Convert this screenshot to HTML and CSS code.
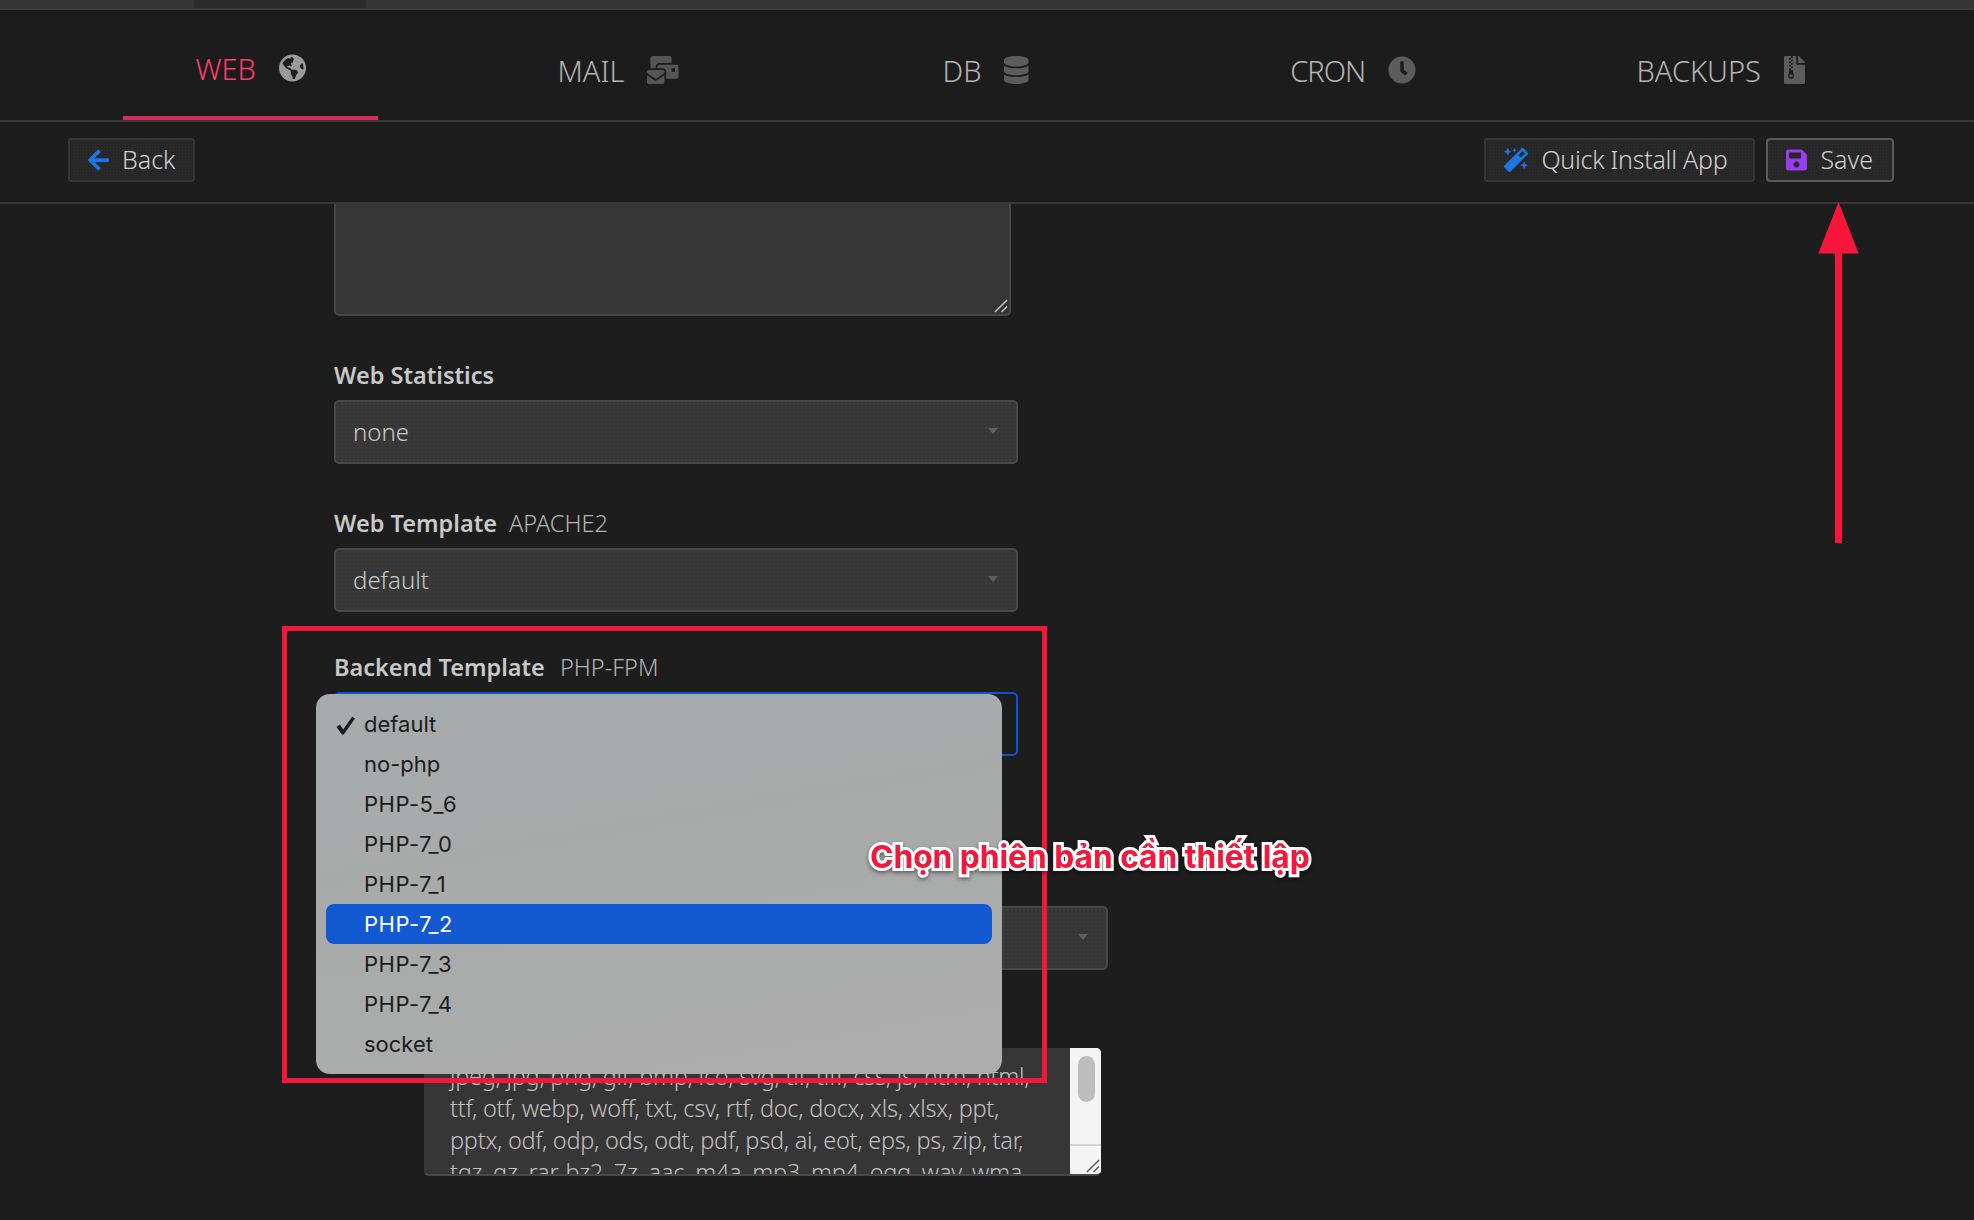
FILE: index.html
```html
<!DOCTYPE html>
<html lang="en">
<head>
  <meta charset="UTF-8" />
  <title>Edit Web Domain</title>
  <link rel="stylesheet" href="styles.css">
</head>
<body>

  <!-- Top strip -->
  <div class="top-strip">
    <div class="top-tab"></div>
  </div>

  <!-- Stat tabs -->
  <nav class="tabs">
    <div class="tab-cell">
      <a class="tab active">WEB
        <svg class="tab-icon globe" viewBox="0 0 496 512"><circle cx="248" cy="256" r="248" fill="#1d1d1d"/><path d="M248 8C111.03 8 0 119.03 0 256s111.03 248 248 248 248-111.03 248-248S384.97 8 248 8zm82.29 357.6c-3.9 3.88-7.99 7.95-11.31 11.28-2.99 3-5.1 6.7-6.17 10.71-1.51 5.66-2.73 11.38-4.77 16.87l-17.39 46.85c-13.76 3-28 4.69-42.65 4.69v-27.38c1.69-12.62-7.64-36.26-22.63-51.25-6-6-9.37-14.14-9.37-22.63v-32.01c0-11.64-6.27-22.34-16.46-27.97-14.37-7.95-34.81-19.06-48.81-26.11-11.48-5.78-22.1-13.14-31.65-21.75l-.8-.72a114.792 114.792 0 0 1-18.06-20.74c-9.38-13.77-24.66-36.42-34.59-51.14 20.47-45.5 57.36-82.04 103.2-101.89l24.01 12.01C203.48 89.74 216 82.01 216 70.11v-11.3c7.99-1.29 16.12-2.11 24.39-2.42l28.3 28.3c6.25 6.25 6.25 16.38 0 22.63L264 112l-10.34 10.34c-3.12 3.12-3.12 8.19 0 11.31l4.69 4.69c3.12 3.12 3.12 8.19 0 11.31l-8 8a8.008 8.008 0 0 1-5.66 2.34h-8.99c-2.08 0-4.08.81-5.58 2.27l-9.92 9.65a8.008 8.008 0 0 0-1.58 9.31l15.59 31.19c2.66 5.32-1.21 11.58-7.15 11.58h-5.64c-1.93 0-3.79-.7-5.24-1.96l-9.28-8.06a16.017 16.017 0 0 0-15.55-3.1l-31.17 10.39a11.95 11.95 0 0 0-8.17 11.34c0 4.53 2.56 8.66 6.61 10.69l11.08 5.54c9.41 4.71 19.79 7.16 30.31 7.16s22.59 27.29 32 32h66.75c8.49 0 16.62 3.37 22.63 9.37l13.69 13.69a30.503 30.503 0 0 1 8.93 21.57 46.536 46.536 0 0 1-13.72 32.98zM417 274.25c-5.79-1.45-10.84-5-14.15-9.97l-17.98-26.97a23.97 23.97 0 0 1 0-26.62l19.59-29.38c2.32-3.47 5.5-6.29 9.24-8.15l12.98-6.49C440.2 193.59 448 223.87 448 256c0 8.67-.74 17.16-1.82 25.54L417 274.25z"/></svg>
      </a>
    </div>
    <div class="tab-cell">
      <a class="tab">MAIL
        <svg class="tab-icon mail" viewBox="0 0 576 512"><path d="M160 448c-25.6 0-51.2-22.4-64-32-64-44.8-83.2-60.8-96-70.4V480c0 17.67 14.33 32 32 32h256c17.67 0 32-14.33 32-32V345.6c-12.8 9.6-32 25.6-96 70.4-12.8 9.6-38.4 32-64 32zm128-192H32c-17.67 0-32 14.33-32 32v16c25.6 19.2 22.4 19.2 115.2 86.4 9.6 6.4 28.8 25.6 44.8 25.6s35.2-19.2 44.8-22.4c92.8-67.2 89.6-67.2 115.2-86.4V288c0-17.67-14.33-32-32-32zm256-96H224c-17.67 0-32 14.33-32 32v32h96c33.21 0 60.59 25.42 63.71 57.82l.29-.22V416h192c17.67 0 32-14.33 32-32V192c0-17.67-14.33-32-32-32zm-32 128h-64v-64h64v64zm-352-96c0-35.29 28.71-64 64-64h224V32c0-17.67-14.33-32-32-32H96C78.33 0 64 14.33 64 32v192h96v-32z"/></svg>
      </a>
    </div>
    <div class="tab-cell">
      <a class="tab">DB
        <svg class="tab-icon db" viewBox="0 0 448 512"><path d="M448 73.143v45.714C448 159.143 347.667 192 224 192S0 159.143 0 118.857V73.143C0 32.857 100.333 0 224 0s224 32.857 224 73.143zM448 176v102.857C448 319.143 347.667 352 224 352S0 319.143 0 278.857V176c48.125 33.143 136.208 48.572 224 48.572S399.874 209.143 448 176zm0 160v102.857C448 479.143 347.667 512 224 512S0 479.143 0 438.857V336c48.125 33.143 136.208 48.572 224 48.572S399.874 369.143 448 336z"/></svg>
      </a>
    </div>
    <div class="tab-cell">
      <a class="tab tab-tight">CRON
        <svg class="tab-icon clock" viewBox="0 0 512 512"><path d="M256,8C119,8,8,119,8,256S119,504,256,504,504,393,504,256,393,8,256,8Zm92.49,313h0l-20,25a16,16,0,0,1-22.49,2.5h0l-67-49.72a40,40,0,0,1-15-31.23V112a16,16,0,0,1,16-16h32a16,16,0,0,1,16,16V256l58,42.5A16,16,0,0,1,348.49,321Z"/></svg>
      </a>
    </div>
    <div class="tab-cell">
      <a class="tab">BACKUPS
        <svg class="tab-icon zip" viewBox="0 0 384 512"><path d="M377 105L279.1 7c-4.5-4.5-10.6-7-17-7H256v128h128v-6.1c0-6.3-2.5-12.4-7-16.9zM128.4 336c-17.9 0-32.4 12.1-32.4 27 0 15 14.6 27 32.5 27s32.4-12.1 32.4-27-14.6-27-32.5-27zM224 136V0h-63.6v32h-32V0H24C10.7 0 0 10.7 0 24v464c0 13.3 10.7 24 24 24h336c13.3 0 24-10.7 24-24V160H248c-13.2 0-24-10.8-24-24zM95.9 32h32v32h-32zm32.3 384c-33.2 0-58-30.4-51.4-62.9L96.4 256v-32h32v-32h-32v-32h32v-32h-32V96h32V64h32v32h-32v32h32v32h-32v32h32v32h-32v32h22.1c5.7 0 10.7 4.1 11.8 9.7l17.3 87.7c6.4 32.4-18.4 62.6-51.4 62.6z"/></svg>
      </a>
    </div>
  </nav>

  <!-- Toolbar -->
  <div class="toolbar">
    <a class="btn">
      <svg class="btn-icon blue" viewBox="0 0 448 512"><path d="M257.5 445.1l-22.2 22.2c-9.4 9.4-24.6 9.4-33.9 0L7 273c-9.4-9.4-9.4-24.6 0-33.9L201.4 44.7c9.4-9.4 24.6-9.4 33.9 0l22.2 22.2c9.5 9.5 9.3 25-.4 34.3L136.6 216H424c13.3 0 24 10.7 24 24v32c0 13.3-10.7 24-24 24H136.6l120.5 114.8c9.8 9.3 10 24.8.4 34.3z"/></svg>
      Back
    </a>
    <div class="toolbar-right">
      <a class="btn btn-quick">
        <svg class="btn-icon blue" viewBox="0 0 512 512"><path d="M224 96l16-32 32-16-32-16-16-32-16 32-32 16 32 16 16 32zM80 160l26.66-53.33L160 80l-53.34-26.67L80 0 53.34 53.33 0 80l53.34 26.67L80 160zm352 128l-26.66 53.33L352 368l53.34 26.67L432 448l26.66-53.33L512 368l-53.34-26.67L432 288zm70.62-193.77L417.77 9.38C411.53 3.12 403.34 0 395.15 0c-8.19 0-16.38 3.12-22.63 9.38L9.38 372.52c-12.5 12.5-12.5 32.76 0 45.25l84.85 84.85c6.25 6.25 14.44 9.37 22.62 9.37 8.19 0 16.38-3.12 22.63-9.37l363.14-363.15c12.5-12.48 12.5-32.75 0-45.24zM359.45 203.46l-50.91-50.91 86.6-86.6 50.91 50.91-86.6 86.6z"/></svg>
        Quick Install App
      </a>
      <a class="btn btn-save">
        <svg class="btn-icon purple" viewBox="0 0 448 512"><path d="M433.941 129.941l-83.882-83.882A48 48 0 0 0 316.118 32H48C21.49 32 0 53.49 0 80v352c0 26.51 21.49 48 48 48h352c26.51 0 48-21.49 48-48V163.882a48 48 0 0 0-14.059-33.941zM224 416c-35.346 0-64-28.654-64-64 0-35.346 28.654-64 64-64s64 28.654 64 64c0 35.346-28.654 64-64 64zm96-304.52V212c0 6.627-5.373 12-12 12H76c-6.627 0-12-5.373-12-12V108c0-6.627 5.373-12 12-12h228.52c3.183 0 6.235 1.264 8.485 3.515l3.48 3.48A11.996 11.996 0 0 1 320 111.48z"/></svg>
        Save
      </a>
    </div>
  </div>

  <!-- Form -->
  <main class="form-area">
    <div class="field-textarea">
      <svg class="grip" viewBox="0 0 15 15"><path d="M1 14L14 1M8 14L14 8" /></svg>
    </div>

    <label class="form-label first">Web Statistics</label>
    <div class="select"><span>none</span><i class="caret"></i></div>

    <label class="form-label">Web Template <small>APACHE2</small></label>
    <div class="select"><span>default</span><i class="caret"></i></div>

    <label class="form-label backend">Backend Template <small>PHP-FPM</small></label>
    <div class="select focused"></div>

    <div class="nested">
      <div class="select"><span></span><i class="caret"></i></div>

      <div class="ext-box">
        <div class="ext-lines">
          <div>jpeg, jpg, png, gif, bmp, ico, svg, tif, tiff, css, js, htm, html,</div>
          <div>ttf, otf, webp, woff, txt, csv, rtf, doc, docx, xls, xlsx, ppt,</div>
          <div>pptx, odf, odp, ods, odt, pdf, psd, ai, eot, eps, ps, zip, tar,</div>
          <div>tgz, gz, rar, bz2, 7z, aac, m4a, mp3, mp4, ogg, wav, wma,</div>
        </div>
        <div class="scrollbar">
          <div class="scroll-thumb"></div>
          <div class="scroll-corner">
            <svg class="grip dark" viewBox="0 0 15 15"><path d="M1 14L14 1M8 14L14 8" /></svg>
          </div>
        </div>
      </div>
    </div>
  </main>

  <!-- Open select menu -->
  <ul class="dropdown">
    <li>
      <svg class="check" viewBox="0 0 22 20"><path d="M1.5 11.5L5 9l3.6 5.2L18 0.8l3 1.7L9.2 19.6H7.2z"/></svg>
      default
    </li>
    <li>no-php</li>
    <li class="ver">PHP-5_6</li>
    <li class="ver">PHP-7_0</li>
    <li class="ver">PHP-7_1</li>
    <li class="ver selected">PHP-7_2</li>
    <li class="ver">PHP-7_3</li>
    <li class="ver">PHP-7_4</li>
    <li>socket</li>
  </ul>

  <!-- Annotations drawn on the screenshot -->
  <div class="mark-box"></div>
  <div class="mark-text">Chọn phiên bản cần thiết lập</div>
  <svg class="mark-arrow" viewBox="0 0 42 342"><path d="M20.5 0L40.7 51.5H24L24 341H17L17 51.5H0.3Z"/></svg>

</body>
</html>
```

FILE: styles.css
```css
* {
  margin: 0;
  padding: 0;
  box-sizing: border-box;
}

body {
  width: 1974px;
  height: 1220px;
  overflow: hidden;
  position: relative;
  background: #1d1d1d;
  color: #c8c8c8;
  font-family: "Noto Sans", sans-serif;
}

.top-strip {
  height: 10px;
  background: #343434;
  border-bottom: 2px solid #3d3d3d;
}

.top-tab {
  width: 172px;
  height: 8px;
  margin-left: 194px;
  background: #2a2a2a;
}

.tabs {
  display: grid;
  grid-template-columns: repeat(5, 367.5px);
  height: 112px;
  padding-left: 67px;
  background: #1c1c1c;
  border-bottom: 2px solid #363636;
}

.tab-cell {
  display: flex;
  justify-content: center;
}

.tab {
  display: flex;
  align-items: center;
  gap: 23px;
  height: 110px;
  padding: 10px 72px 0;
  font-size: 29px;
  font-weight: 300;
  color: #b4b4b4;
}

.tab-tight {
  letter-spacing: -1px;
}

.tab.active {
  color: #ff3d72;
  border-bottom: 4px solid #d92b60;
}

.tab-icon {
  height: 28px;
  fill: #5c5c5c;
}

.tab-icon.globe {
  fill: #9a9a9a;
}

.tab-icon.mail {
  fill: #555;
}

.toolbar {
  display: flex;
  justify-content: space-between;
  align-items: center;
  height: 82px;
  padding: 0 80px 4px 68px;
  border-bottom: 2px solid #363636;
}

.toolbar-right {
  display: flex;
  gap: 11px;
}

.btn {
  display: flex;
  align-items: center;
  gap: 13px;
  height: 44px;
  padding: 0 18px 3px;
  font-size: 25px;
  font-weight: 300;
  color: #d0d0d0;
  background-color: #272727;
  background-image: radial-gradient(#2e2e2e 1px, transparent 1px);
  background-size: 3px 3px;
  border: 2px solid #353535;
  border-radius: 4px;
}

.btn-quick {
  padding-right: 26px;
  letter-spacing: -0.25px;
}

.btn-save {
  padding-right: 19px;
  border-color: #5a5a5a;
}

.btn-icon {
  height: 24px;
  margin-top: 3px;
}

.btn-icon.blue {
  fill: #1b77e6;
}

.btn-icon.purple {
  fill: #9a3cf0;
}

.form-area {
  height: 1016px;
  padding-left: 334px;
  overflow: hidden;
}

.field-textarea {
  position: relative;
  width: 677px;
  height: 112px;
  background: #363636;
  border: 2px solid #474747;
  border-top: 0;
  border-radius: 0 0 5px 5px;
}

.grip {
  position: absolute;
  right: 1px;
  bottom: 1px;
  width: 14px;
  height: 14px;
  fill: none;
  stroke: #c8c8c8;
  stroke-width: 1.5;
}

.grip.dark {
  stroke: #555;
}

.form-label {
  display: block;
  margin-top: 41px;
  margin-bottom: 8px;
  height: 35px;
  padding-top: 1px;
  line-height: 35px;
  font-size: 23.5px;
  font-weight: 600;
  color: #c8c8c8;
}

.form-label.backend {
  margin-top: 37px;
}

.form-label small {
  margin-left: 6px;
  font-size: 23.5px;
  font-weight: 300;
  color: #b4b4b4;
}

.form-label.backend small {
  margin-left: 9px;
}

.select {
  position: relative;
  display: flex;
  align-items: center;
  width: 684px;
  height: 64px;
  padding: 0 17px 2px;
  font-size: 24px;
  font-weight: 300;
  color: #c8c8c8;
  background-color: #363636;
  background-image: radial-gradient(#3c3c3c 1px, transparent 1px);
  background-size: 4px 4px;
  border: 2px solid #484848;
  border-radius: 5px;
}

.select.focused {
  background: #1d1d1d;
  border-color: #0d55cf;
}

.caret {
  position: absolute;
  right: 18px;
  top: 26px;
  border-left: 5px solid transparent;
  border-right: 5px solid transparent;
  border-top: 6px solid #5f5f5f;
}

.nested {
  margin-top: 150px;
  margin-left: 90px;
}

.ext-box {
  position: relative;
  display: flex;
  width: 677px;
  height: 128px;
  margin-top: 78px;
  overflow: hidden;
  background: #363636;
  border-bottom: 2px solid #484848;
  border-radius: 5px;
}

.ext-lines {
  flex: 1;
  min-width: 0;
  overflow: hidden;
  padding: 12px 0 0 26px;
  font-size: 23.5px;
  font-weight: 300;
  letter-spacing: -0.25px;
  line-height: 32px;
  color: #c0c0c0;
  white-space: nowrap;
}

.scrollbar {
  position: relative;
  flex: none;
  width: 31px;
  background: #f4f4f4;
  border: 2px solid #f4f4f4;
}

.scroll-thumb {
  width: 17px;
  height: 46px;
  margin: 6px 0 0 6px;
  background: #bdbdbd;
  border-radius: 9px;
}

.scroll-corner {
  position: absolute;
  left: -2px;
  right: -2px;
  bottom: -2px;
  height: 30px;
  border-top: 2px solid #d4d4d4;
}

.dropdown {
  position: absolute;
  left: 316px;
  top: 694px;
  width: 686px;
  height: 380px;
  padding: 10px 10px 0;
  list-style: none;
  background: linear-gradient(170deg, #a7abac, #a9aaaa 50%, #adadad);
  border-radius: 14px;
  font-family: Inter, sans-serif;
  font-size: 22px;
  color: #1c1c1c;
}

.dropdown li {
  position: relative;
  height: 40px;
  padding-left: 38px;
  line-height: 40px;
  border-radius: 8px;
}

.dropdown li.ver {
  letter-spacing: 0.5px;
}

.dropdown li.selected {
  background: #1258d0;
  color: #fff;
}

.check {
  position: absolute;
  left: 9px;
  top: 12px;
  width: 21px;
  height: 19px;
  fill: #1c1c1c;
}

.mark-box {
  position: absolute;
  left: 282px;
  top: 626px;
  width: 765px;
  height: 457px;
  border: 5.5px solid #f5163a;
}

.mark-text {
  position: absolute;
  left: 870px;
  top: 837px;
  font-family: Inter, sans-serif;
  font-size: 31.7px;
  font-weight: 700;
  line-height: 40px;
  white-space: nowrap;
  color: #f5163a;
  -webkit-text-stroke: 6px #fff;
  paint-order: stroke fill;
  filter: drop-shadow(0 2px 2px rgba(0, 0, 0, 0.45));
}

.mark-arrow {
  position: absolute;
  left: 1818px;
  top: 202px;
  width: 42px;
  height: 342px;
  fill: #f5163a;
}
```
